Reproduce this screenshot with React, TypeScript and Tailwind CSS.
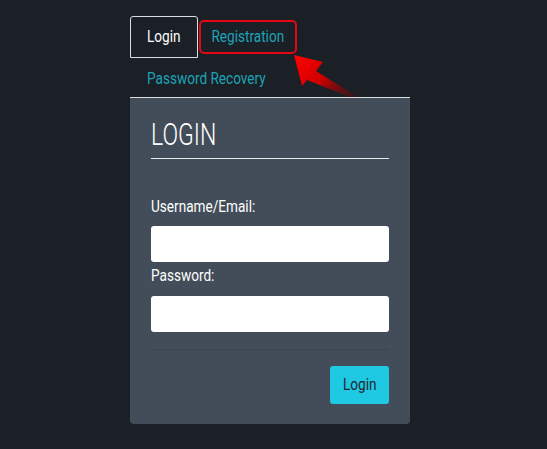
import React from "react";

const font = { fontFamily: 'Roboto, "Liberation Sans", sans-serif' };

// narrow text, close to the condensed face in the screenshot
const Narrow = ({ children }: { children: React.ReactNode }) => (
  <span className="inline-block scale-x-[0.85]">{children}</span>
);

export default function App() {
  return (
    <div className="relative min-h-[449px] w-full bg-[#1b1f26]" style={font}>
      <div className="ml-[130px] w-[280px] pt-[16px]">
        {/* tabs */}
        <div className="flex flex-wrap border-b border-[#d8dde2]">
          <div className="flex h-[42px] w-[68px] items-center justify-center rounded-t-[3px] border border-[#d8dde2] text-[16px] text-white">
            <Narrow>Login</Narrow>
          </div>
          <div className="ml-[1px] mt-[4px] flex h-[34px] w-[98px] items-center justify-center rounded-[5px] border-2 border-[#e30613] text-[16px] text-[#1ea3b7]">
            <Narrow>Registration</Narrow>
          </div>
          <div className="flex h-[39px] w-full items-center pl-[17px] pt-[3px] text-[16px] text-[#1ea3b7]">
            <span className="inline-block origin-left scale-x-[0.85]">Password Recovery</span>
          </div>
        </div>

        {/* card */}
        <div className="h-[326px] rounded-b-[4px] bg-[#424d59] px-[21px] pt-[18px]">
          <h1 className="border-b border-[#e6e9ec] pb-[6px] text-[32px] font-light leading-[36px] text-white">
            <span className="inline-block origin-left scale-x-[0.72]">LOGIN</span>
          </h1>
          <div className="mt-[38px] text-[16px] leading-[20px] text-white">
            <span className="inline-block origin-left scale-x-[0.85]">Username/Email:</span>
          </div>
          <input className="mt-[9px] block h-[36px] w-full rounded-[3px] bg-white" />
          <div className="mt-[4px] text-[16px] leading-[20px] text-white">
            <span className="inline-block origin-left scale-x-[0.85]">Password:</span>
          </div>
          <input type="password" className="mt-[10px] block h-[36px] w-full rounded-[3px] bg-white" />
          <div className="mt-[17px] border-t border-[#3a444f]" />
          <div className="mt-[16px] flex justify-end">
            <button className="h-[38px] w-[59px] rounded-[3px] bg-[#1fc8e3] text-[16px] text-[#1e2630]">
              <Narrow>Login</Narrow>
            </button>
          </div>
        </div>
      </div>

      {/* annotation arrow */}
      <svg className="pointer-events-none absolute left-0 top-0" width="547" height="449" viewBox="0 0 547 449">
        <defs>
          <linearGradient id="arr" x1="296" y1="56" x2="356" y2="100" gradientUnits="userSpaceOnUse">
            <stop offset="0" stopColor="#ff0000" />
            <stop offset="0.45" stopColor="#d10000" />
            <stop offset="1" stopColor="#5a0a10" stopOpacity="0.3" />
          </linearGradient>
        </defs>
        <polygon
          points="294,55 323,62 316,71 358,97 350,97 307,80 302,86"
          fill="url(#arr)"
        />
      </svg>
    </div>
  );
}
